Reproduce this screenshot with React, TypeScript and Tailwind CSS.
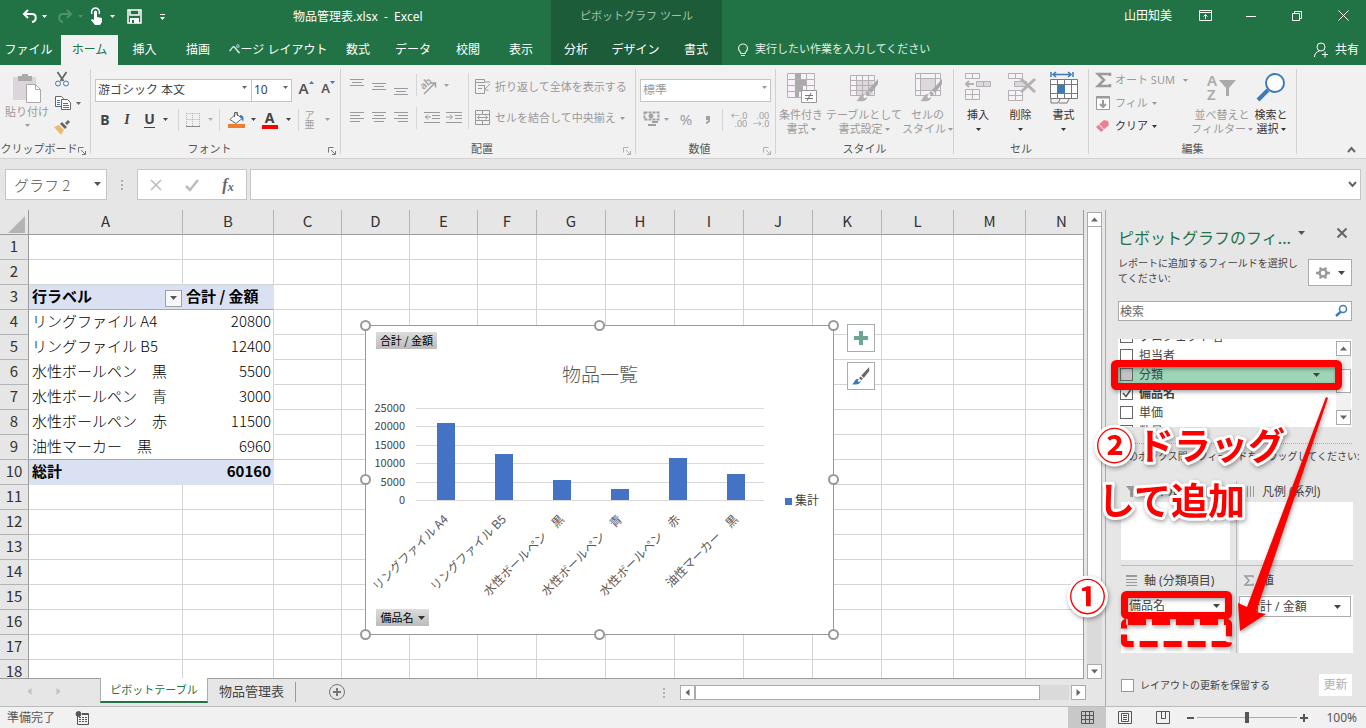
import type { ReactNode } from "react"

const columns = [
  { name: "A", width: 154 },
  { name: "B", width: 91 },
  { name: "C", width: 68 },
  { name: "D", width: 68 },
  { name: "E", width: 68 },
  { name: "F", width: 59 },
  { name: "G", width: 69 },
  { name: "H", width: 69 },
  { name: "I", width: 69 },
  { name: "J", width: 69 },
  { name: "K", width: 69 },
  { name: "L", width: 72 },
  { name: "M", width: 72 },
  { name: "N", width: 72 },
]

const pivot: Record<number, [string, string]> = {
  3: ["行ラベル", "合計 / 金額"],
  4: ["リングファイル A4", "20800"],
  5: ["リングファイル B5", "12400"],
  6: ["水性ボールペン　黒", "5500"],
  7: ["水性ボールペン　青", "3000"],
  8: ["水性ボールペン　赤", "11500"],
  9: ["油性マーカー　黒", "6960"],
  10: ["総計", "60160"],
}

const rows = Array.from({ length: 18 }, (_, i) => i + 1)

const bars = [4, 5, 6, 7, 8, 9].map((n) => ({ label: pivot[n][0], value: Number(pivot[n][1]) }))

const fields = [
  { name: "プロジェクト名" },
  { name: "担当者" },
  { name: "分類", active: true },
  { name: "備品名", checked: true },
  { name: "単価" },
  { name: "数量" },
]

function Caret({ small, className = "" }: { small?: boolean; className?: string }) {
  return (
    <svg
      viewBox="0 0 7 4"
      className={`shrink-0 ${small ? "h-[3px] w-[5px]" : "h-1 w-[7px]"} ${className}`}
      fill="currentColor"
      aria-hidden="true"
    >
      <path d="M0 0h7L3.5 4z" />
    </svg>
  )
}

function Icon({ size = 16, className = "", children }: { size?: number; className?: string; children: ReactNode }) {
  return (
    <svg
      width={size}
      height={size}
      viewBox={`0 0 ${size} ${size}`}
      fill="none"
      stroke="currentColor"
      className={`shrink-0 overflow-visible ${className}`}
      aria-hidden="true"
    >
      {children}
    </svg>
  )
}

function Tool({ label, className = "", children }: { label: string; className?: string; children: ReactNode }) {
  return (
    <button type="button" aria-label={label} className={`flex h-6 shrink-0 items-center justify-center ${className}`}>
      {children}
    </button>
  )
}

function Separator() {
  return <div className="mx-1 h-[22px] w-px shrink-0 bg-[#d5d5d5]" />
}

function Group({
  title,
  launcher,
  faded,
  className,
  children,
}: {
  title: string
  launcher?: boolean
  faded?: boolean
  className: string
  children: ReactNode
}) {
  return (
    <section className={`flex shrink-0 ${className}`}>
      <div className="flex min-w-0 flex-1 flex-col">
        <div className="h-[75px]">{children}</div>
        <div className="flex h-[18px] text-[#555]">
          <h2 className="flex flex-1 items-center justify-center text-[11px] whitespace-nowrap">{title}</h2>
          {launcher && (
            <button
              type="button"
              aria-label={`${title}の設定`}
              className={`mr-1 flex shrink-0 items-end pb-[3px] ${faded ? "text-[#b0b0b0]" : "text-[#777]"}`}
            >
              <Icon size={8}>
                <path d="M.5 5.5V.5h5M3 3l4 4M7.5 4v3.5H4" />
              </Icon>
            </button>
          )}
        </div>
      </div>
      <div className="my-1 w-px bg-[#d2d2d2]" />
    </section>
  )
}

function BigTool({
  icon,
  lines,
  faded,
  className,
}: {
  icon: ReactNode
  lines: string[]
  faded?: boolean
  className: string
}) {
  return (
    <button
      type="button"
      className={`flex shrink-0 flex-col items-center pt-[7px] text-[11px] leading-[14px] ${
        faded ? "text-[#9a9a9a]" : "text-[#333]"
      } ${className}`}
    >
      {icon}
      <span className="mt-1 whitespace-nowrap">{lines[0]}</span>
      <span className="flex h-[14px] items-center gap-0.5 whitespace-nowrap">
        {lines[1]}
        <Caret small />
      </span>
    </button>
  )
}

function LineTool({ label, d }: { label: string; d: string }) {
  return (
    <Tool label={label} className="w-[22px] text-[#9a9a9a]">
      <Icon>
        <path d={d} />
      </Icon>
    </Tool>
  )
}

function Brush({ blue }: { blue?: boolean }) {
  return (
    <g stroke="none" fill={blue ? "#666" : "#aaa"}>
      <path d="M30 7v5l-7 9-3-3z" />
      <path d="M19 19l3 3-2 2-3-3z" />
      <path fill={blue ? "#3f7ab8" : "#b4b0b4"} d="M16 22l3 3c0 4-4 5-11 4 3-1 3-7 8-7z" />
      <circle cx="17" cy="24.5" r="1.5" fill="#fff" />
    </g>
  )
}

function TitleBar() {
  const tabs = [
    { name: "ファイル", width: "w-[61px] pr-1" },
    { name: "ホーム", width: "w-[57px]", active: true },
    { name: "挿入", width: "w-[53px]" },
    { name: "描画", width: "w-[54px]" },
    { name: "ページ レイアウト", width: "w-[106px]" },
    { name: "数式", width: "w-[54px]" },
    { name: "データ", width: "w-[56px]" },
    { name: "校閲", width: "w-[54px]" },
    { name: "表示", width: "w-[52px]" },
  ]
  return (
    <header className="flex h-[65px] shrink-0 bg-[#217346] text-xs text-white">
      <div className="flex w-[551px] shrink-0 flex-col">
        <div className="flex h-[33px] items-center pl-5">
          <Tool label="元に戻す" className="w-7 gap-1">
            <Icon size={17}>
              <path strokeWidth="2" d="M3 6h8c5 0 5 7 0 8M7 2L3 6l4 4" />
            </Icon>
            <Caret small />
          </Tool>
          <Tool label="やり直し" className="ml-2 w-7 gap-1 text-[#4f9169]">
            <Icon size={17}>
              <path strokeWidth="2" d="M14 6H6c-5 0-5 7 0 8M10 2l4 4-4 4" />
            </Icon>
            <Caret small />
          </Tool>
          <Tool label="タッチ/マウス モード" className="ml-1 w-7 gap-1">
            <Icon size={17}>
              <path d="M3 6a4 4 0 1 1 7 0" strokeWidth="1.5" />
              <path stroke="none" fill="currentColor" d="M5 4a1.5 1.5 0 0 1 3 0v5l5 1v4l-2 3H6l-4-5 1-1 2 1z" />
            </Icon>
            <Caret small />
          </Tool>
          <Tool label="上書き保存" className="ml-2 w-5">
            <Icon size={15}>
              <path strokeWidth="1.5" d="M1 1h13v13H1zM3 1v5h9V1" />
              <path stroke="none" fill="currentColor" d="M3 9h9v5H3z" />
              <path stroke="#217346" strokeWidth="2" d="M6 11v3" />
            </Icon>
          </Tool>
          <Tool label="クイック アクセスのカスタマイズ" className="ml-2 w-5 flex-col gap-0.5">
            <span className="h-px w-[5px] bg-white" />
            <Caret small />
          </Tool>
          <h1 className="ml-auto w-[258px] whitespace-pre">物品管理表.xlsx  -  Excel</h1>
        </div>
        <nav className="mt-0.5 flex h-[30px]">
          {tabs.map((tab) => (
            <button
              key={tab.name}
              type="button"
              className={`shrink-0 whitespace-nowrap ${tab.width} ${tab.active ? "bg-[#f1f1f1] text-[#217346]" : ""}`}
            >
              {tab.name}
            </button>
          ))}
        </nav>
      </div>
      <div className="flex w-[171px] shrink-0 flex-col bg-[#1d5c39]">
        <p className="flex h-[33px] items-center justify-center text-[11px] text-[#a3c4b0]">ピボットグラフ ツール</p>
        <nav className="mt-0.5 flex h-[30px]">
          <button type="button" className="w-[50px]">分析</button>
          <button type="button" className="w-[69px]">デザイン</button>
          <button type="button" className="w-[52px]">書式</button>
        </nav>
      </div>
      <div className="flex min-w-0 flex-1 flex-col">
        <div className="flex h-[31px] items-center justify-end">
          <span className="mr-[10px]">山田知美</span>
          <Tool label="リボンの表示オプション" className="w-[46px]">
            <Icon size={13}>
              <path d="M.5 1.5h12v10H.5zM.5 3.5h12M6.5 10V5.5M4.5 7.5l2-2 2 2" />
            </Icon>
          </Tool>
          <Tool label="最小化" className="w-[46px]">
            <Icon size={10}>
              <path d="M0 5.5h10" />
            </Icon>
          </Tool>
          <Tool label="元に戻す (縮小)" className="w-[46px]">
            <Icon size={10}>
              <path d="M.5 2.5h7v7h-7zM2.5 2V.5h7v7H8" />
            </Icon>
          </Tool>
          <Tool label="閉じる" className="w-[46px]">
            <Icon size={11}>
              <path d="M.5.5l10 10M10.5.5l-10 10" />
            </Icon>
          </Tool>
        </div>
        <div className="flex h-[34px] items-center justify-between pt-[3px] pr-[7px] pl-[15px]">
          <button type="button" className="flex items-center gap-1.5 text-[11px] text-[#e3efe8]">
            <Icon size={12}>
              <path strokeWidth="1.2" d="M4 9.5C4 8 1.5 7 1.5 4.5a4.5 4.5 0 0 1 9 0C10.5 7 8 8 8 9.5zM4 11.5h4" />
            </Icon>
            実行したい作業を入力してください
          </button>
          <button type="button" className="flex items-center gap-1.5">
            <Icon>
              <circle cx="8" cy="5" r="4" />
              <path d="M1.5 15c0-3 2-5.5 5-6M9 12.5h6M12 9.5v6" />
            </Icon>
            共有
          </button>
        </div>
      </div>
    </header>
  )
}

function ClipboardGroup() {
  return (
    <Group title="クリップボード" launcher className="w-[91px]">
      <div className="flex">
        <button
          type="button"
          className="flex w-[54px] flex-col items-center pt-2 text-[11px] leading-[14px] text-[#9a9a9a]"
        >
          <Icon size={30}>
            <path stroke="none" fill="#dcd6dc" d="M1 4h23v23H1z" />
            <path stroke="none" fill="#aaa" d="M6 3h4V1h6v2h4v5H6z" />
            <path stroke="#aaa" fill="#fff" d="M14.5 11.5h9l5 5v13h-14z" />
            <path stroke="#aaa" d="M23.5 11.5v5h5" />
          </Icon>
          <span className="mt-0.5">貼り付け</span>
          <Caret small className="mt-[5px]" />
        </button>
        <div className="flex flex-col pt-0.5">
          <Tool label="切り取り" className="w-4">
            <Icon>
              <path stroke="#666" strokeWidth="1.8" d="M3.5 1l6 9M12.5 1l-6 9" />
              <circle cx="4" cy="12.5" r="2.5" stroke="#3f7ab8" />
              <circle cx="12" cy="12.5" r="2.5" stroke="#3f7ab8" />
            </Icon>
          </Tool>
          <Tool label="コピー" className="w-7 gap-[5px]">
            <Icon>
              <path stroke="#666" fill="#fff" d="M.5 1.5h6l2 2v8h-8z" />
              <path stroke="#666" fill="#fff" d="M6.5 4.5h6l3 3v7h-9z" />
              <path stroke="#3f7ab8" d="M2 5.5h3M2 7.5h3M2 9.5h3M8 8.5h5M8 10.5h6M8 12.5h6" />
            </Icon>
            <Caret small className="text-[#666]" />
          </Tool>
          <Tool label="書式のコピー/貼り付け" className="w-4">
            <Icon>
              <path stroke="none" fill="#eebb6d" d="M0 8l5-2 5 5-3 5z" />
              <path stroke="none" fill="#666" d="M6 5l2-2 5 5-2 2zM11 4l3-3 2 2-3 3z" />
            </Icon>
          </Tool>
        </div>
      </div>
    </Group>
  )
}

function FontGroup() {
  return (
    <Group title="フォント" launcher className="w-[250px]">
      <div className="flex pt-[11px] pl-1">
        <div className="relative">
          <select
            aria-label="フォント"
            className="h-[23px] w-[157px] appearance-none border border-[#c6c6c6] bg-white pl-0.5 text-xs leading-none text-[#444]"
          >
            <option>游ゴシック 本文</option>
          </select>
          <Caret small className="pointer-events-none absolute top-[10px] right-[5px] text-[#666]" />
        </div>
        <div className="relative">
          <select
            aria-label="フォント サイズ"
            className="h-[23px] w-10 appearance-none border border-l-0 border-[#c6c6c6] bg-white pl-0.5 text-xs leading-none text-[#444]"
          >
            <option>10</option>
          </select>
          <Caret small className="pointer-events-none absolute top-[10px] right-1 text-[#666]" />
        </div>
        <Tool label="フォント サイズの拡大" className="w-7 text-[#555]">
          <span className="text-[15px] leading-5 font-semibold">A</span>
          <Caret small className="mb-3 rotate-180 text-[#3f7ab8]" />
        </Tool>
        <Tool label="フォント サイズの縮小" className="w-4 text-[#555]">
          <span className="text-[13px] leading-5 font-semibold">A</span>
          <Caret small className="mb-3 text-[#3f7ab8]" />
        </Tool>
      </div>
      <div className="mt-[6px] flex items-center pl-[3px] text-sm text-[#444]">
        <Tool label="太字" className="w-[22px] font-bold">B</Tool>
        <Tool label="斜体" className="w-[22px] font-['Liberation_Serif',serif] font-bold italic">I</Tool>
        <Tool label="下線" className="w-9 gap-2 font-bold">
          <span className="border-b border-[#444] leading-4">U</span>
          <Caret small />
        </Tool>
        <Separator />
        <Tool label="罫線" className="w-8 gap-2 text-[#b0b0b0]">
          <Icon size={14}>
            <path strokeDasharray="1 1" d="M.5.5h13M.5 6.5h13M.5 0v13M6.5 0v13M13.5 0v13" />
            <path stroke="#888" d="M0 13.5h14" />
          </Icon>
          <Caret small />
        </Tool>
        <Separator />
        <Tool label="塗りつぶしの色" className="ml-0.5 w-8 gap-1.5">
          <Icon size={17}>
            <path stroke="#666" fill="#fff" d="M8 2.5l6 5-6 5-6-4zM6.5 6V1.5h3V5" />
            <path stroke="none" fill="#3f7ab8" d="M12 4c4 0 4 4 3 7-1-2-1-4-3-5z" />
            <path stroke="none" fill="#ed7d31" d="M0 13h17v4H0z" />
          </Icon>
          <Caret small />
        </Tool>
        <Tool label="フォントの色" className="w-9 gap-2">
          <span className="w-4 border-b-4 border-[#f00] text-center leading-[14px] font-bold">A</span>
          <Caret small />
        </Tool>
        <Separator />
        <Tool label="ふりがなの表示/非表示" className="w-7 gap-2.5 text-[#a0a0a0]">
          <span className="flex flex-col items-center text-[10px] leading-[9px]">
            <span>ア</span>
            <span>亜</span>
          </span>
          <Caret small />
        </Tool>
      </div>
    </Group>
  )
}

function AlignGroup() {
  return (
    <Group title="配置" launcher faded className="w-[295px]">
      <div className="flex pt-2 pl-[5px]">
        <div className="flex flex-col gap-[9px]">
          <div className="flex items-center">
            <LineTool label="上揃え" d="M1 2.5h14M3 5.5h10M1 8.5h14" />
            <LineTool label="上下中央揃え" d="M1 6.5h14M3 9.5h10M1 12.5h14" />
            <LineTool label="下揃え" d="M1 11.5h14M3 14.5h10M1 17.5h14" />
            <Separator />
            <Tool label="方向" className="w-7 gap-1.5 text-[#a0a0a0]">
              <Icon size={17}>
                <path d="M3 17L14 6M10 6h4.5v4.5" strokeWidth="1.5" />
                <text
                  x="0"
                  y="11"
                  fontSize="10"
                  fontWeight="600"
                  stroke="none"
                  fill="currentColor"
                  transform="rotate(-40 4 9)"
                >
                  ab
                </text>
              </Icon>
              <Caret small />
            </Tool>
          </div>
          <div className="flex items-center">
            <LineTool label="左揃え" d="M1 2.5h14M1 5.5h10M1 8.5h14M1 11.5h10" />
            <LineTool label="中央揃え" d="M1 2.5h14M3 5.5h10M1 8.5h14M3 11.5h10" />
            <LineTool label="右揃え" d="M1 2.5h14M5 5.5h10M1 8.5h14M5 11.5h10" />
            <Separator />
            <LineTool label="インデントを減らす" d="M0 2.5h16M8 5.5h8M8 8.5h8M0 12.5h16M7 7H1M4 4.5L1.5 7 4 9.5" />
            <LineTool label="インデントを増やす" d="M0 2.5h16M9 5.5h7M9 8.5h7M0 12.5h16M0 7h6M4 4.5L6.5 7 4 9.5" />
          </div>
        </div>
        <div className="mr-1.5 ml-[3px] h-[56px] w-px bg-[#d5d5d5]" />
        <div className="flex flex-col gap-[7px] pt-0.5 text-[11px] whitespace-nowrap text-[#9a9a9a]">
          <button type="button" className="flex h-6 items-center gap-1">
            <Icon>
              <path d="M.5.5h9v3h-9zM.5 3.5v11h9v-3M3 6.5h7M3 9.5h4M10 3h5M15 5l-5 5M9.5 7v4h4" />
            </Icon>
            折り返して全体を表示する
          </button>
          <button type="button" className="flex h-6 items-center gap-1">
            <Icon>
              <path d="M.5.5h14v14H.5zM.5 4.5h14M.5 10.5h14M7.5 0v4M7.5 11v4M2.5 7.5h10M4.5 5.5l-2 2 2 2M10.5 5.5l2 2-2 2" />
            </Icon>
            セルを結合して中央揃え
            <Caret small />
          </button>
        </div>
      </div>
    </Group>
  )
}

function NumberGroup() {
  return (
    <Group title="数値" launcher faded className="w-[140px]">
      <div className="relative mt-[11px] ml-1 w-[131px]">
        <select
          aria-label="表示形式"
          className="h-[23px] w-full appearance-none border border-[#c6c6c6] bg-white pl-0.5 text-xs leading-none text-[#999]"
        >
          <option>標準</option>
        </select>
        <Caret small className="pointer-events-none absolute top-[10px] right-1 text-[#999]" />
      </div>
      <div className="mt-[6px] flex items-center pl-1.5 text-[#a0a0a0]">
        <Tool label="通貨表示形式" className="w-7 gap-1">
          <Icon size={17}>
            <path d="M1.5 1.5h14v7h-14z" strokeWidth="2" strokeDasharray="3 1" />
            <circle cx="8" cy="5" r="2" fill="currentColor" />
            <path strokeWidth="2" d="M9 11h6M5 14h8" />
          </Icon>
          <Caret small />
        </Tool>
        <Tool label="パーセント スタイル" className="ml-1 w-6 text-[15px]">%</Tool>
        <Tool label="桁区切りスタイル" className="w-5">
          <Icon size={8}>
            <path stroke="none" fill="currentColor" d="M2 0h4v4c0 2-1 3-4 4V6c1 0 2-1 2-2H2z" />
          </Icon>
        </Tool>
        <Separator />
        <Tool label="小数点以下の表示桁数を増やす" className="w-6">
          <span className="flex flex-col items-end text-[9px] leading-[8px]">
            <span>←.0</span>
            <span>.00</span>
          </span>
        </Tool>
        <Tool label="小数点以下の表示桁数を減らす" className="w-5">
          <span className="flex flex-col items-end text-[9px] leading-[8px]">
            <span>.00</span>
            <span>→.0</span>
          </span>
        </Tool>
      </div>
    </Group>
  )
}

function StyleGroup() {
  return (
    <Group title="スタイル" className="w-[178px]">
      <div className="flex">
        <BigTool
          faded
          className="w-[50px]"
          lines={["条件付き", "書式"]}
          icon={
            <Icon size={32} className="text-[#b4b0b4]">
              <path fill="#f7f2f7" d="M2.5 1.5h27v24h-27zM2.5 7.5h27M2.5 13.5h27M2.5 19.5h27M10.5 1v24M21.5 1v24" />
              <path stroke="none" fill="#aaa" d="M10 1h6v6h-6zM10 8h11v5H10zM10 14h8v5h-8zM10 20h4v5h-4z" />
              <path stroke="#999" fill="#fff" d="M16.5 18.5h15v12h-15z" />
              <path stroke="#777" d="M20 23.5h8M20 26.5h8M26 21l-4 8" />
            </Icon>
          }
        />
        <BigTool
          faded
          className="w-[76px]"
          lines={["テーブルとして", "書式設定"]}
          icon={
            <Icon size={32} className="text-[#b4b0b4]">
              <path stroke="none" fill="#f7f2f7" d="M2 3h25v21H2z" />
              <path stroke="none" fill="#ddd8dd" d="M9 9h16v14H9z" />
              <path d="M2.5 3.5h24v20h-24zM2.5 8.5h24M2.5 13.5h24M2.5 18.5h24M8.5 3v20M14.5 3v20M20.5 3v20" />
              <Brush />
            </Icon>
          }
        />
        <BigTool
          faded
          className="w-[51px]"
          lines={["セルの", "スタイル"]}
          icon={
            <Icon size={32} className="text-[#b4b0b4]">
              <path fill="#f7f2f7" d="M3.5 1.5h25v22h-25zM3.5 6.5h25M3.5 18.5h25M8.5 1v22M23.5 1v22" />
              <path fill="#ddd8dd" d="M8.5 6.5h15v12h-15z" />
              <Brush />
            </Icon>
          }
        />
      </div>
    </Group>
  )
}

function CellGroup() {
  return (
    <Group title="セル" className="w-[135px]">
      <div className="flex pl-[3px]">
        <BigTool
          className="w-[42px]"
          lines={["挿入", ""]}
          icon={
            <Icon size={32} className="text-[#b4b0b4]">
              <path fill="#f7f2f7" d="M3.5 1.5h14v5h-14zM10.5 1v6M3.5 17.5h14v10h-14zM3.5 22.5h14M10.5 17v10" />
              <path fill="#ddd8dd" d="M14.5 9.5h14v5h-14zM21.5 9v6" />
              <path strokeWidth="2" d="M4 12h8M7 9l-3 3 3 3" />
            </Icon>
          }
        />
        <BigTool
          className="w-[43px]"
          lines={["削除", ""]}
          icon={
            <Icon size={32} className="text-[#b4b0b4]">
              <path fill="#f7f2f7" d="M3.5 1.5h14v5h-14zM10.5 1v6M3.5 18.5h14v10h-14zM3.5 23.5h14M10.5 18v10" />
              <path fill="#ddd8dd" d="M9.5 9.5h12v5h-12z" />
              <path strokeWidth="3" d="M16 7l14 13M30 7L16 20" />
            </Icon>
          }
        />
        <BigTool
          className="w-[43px]"
          lines={["書式", ""]}
          icon={
            <Icon size={32} className="text-[#777]">
              <path stroke="#3f7ab8" strokeWidth="1.5" d="M3 0v5M25 0v5M5 2.5h18M8 0L5 2.5 8 5M20 0l3 2.5L20 5" />
              <path fill="#fff" d="M2.5 7.5h27v19h-27zM2.5 12.5h27M2.5 21.5h27M9.5 7v19M16.5 7v19M23.5 7v19" />
              <path stroke="none" fill="#3f7ab8" d="M10 13h7v8h-7z" />
              <path d="M3 27v4h7l2-4M11 31h8l2-4" />
            </Icon>
          }
        />
      </div>
    </Group>
  )
}

function EditGroup() {
  return (
    <Group title="編集" className="w-[208px]">
      <div className="flex">
        <div className="flex w-[104px] flex-col items-start pt-[3px] pl-1.5 text-[11px] text-[#9a9a9a]">
          <button type="button" className="flex h-6 items-center gap-1">
            <Icon>
              <path strokeWidth="2.5" d="M15 4V2H3l6 6-6 6h12v-2" />
            </Icon>
            オート SUM
            <Caret small className="ml-1" />
          </button>
          <button type="button" className="flex h-[22px] items-center gap-1">
            <Icon>
              <path d="M1.5 1.5h13v13h-13z" fill="#fff" />
              <path strokeWidth="2" d="M1 2.5h14M8 5v7M5 9l3 3 3-3" />
            </Icon>
            フィル
            <Caret small />
          </button>
          <button type="button" className="flex h-6 items-center gap-1 text-[#333]">
            <Icon>
              <path stroke="none" fill="#e88098" d="M1 9l8-7 4 1 1 4-8 7z" />
              <path stroke="#fff" d="M4 6.5l5 5" />
            </Icon>
            クリア
            <Caret small />
          </button>
        </div>
        <BigTool
          faded
          className="w-[58px]"
          lines={["並べ替えと", "フィルター"]}
          icon={
            <Icon size={32} className="text-[#aaa]">
              <text x="1" y="14" fontSize="15" fontWeight="600" stroke="none" fill="currentColor">
                A
              </text>
              <text x="1" y="28" fontSize="15" fontWeight="600" stroke="none" fill="currentColor">
                Z
              </text>
              <path stroke="none" fill="currentColor" d="M13 8h17l-7 8v8h-3v-8z" />
            </Icon>
          }
        />
        <BigTool
          className="w-[40px]"
          lines={["検索と", "選択"]}
          icon={
            <Icon size={32}>
              <circle cx="20" cy="11" r="9" stroke="#3f7ab8" strokeWidth="2" fill="#fff" />
              <path stroke="#3f7ab8" strokeWidth="4" d="M13 18L3 28" />
            </Icon>
          }
        />
      </div>
    </Group>
  )
}

function Ribbon() {
  return (
    <div className="flex h-[94px] shrink-0 border-b border-[#d2d2d2] bg-[#f1f1f1]">
      <ClipboardGroup />
      <FontGroup />
      <AlignGroup />
      <NumberGroup />
      <StyleGroup />
      <CellGroup />
      <EditGroup />
      <div className="flex flex-1 items-end justify-end pr-2.5 pb-1">
        <button type="button" aria-label="リボンを折りたたむ" className="text-[#666]">
          <Icon size={9}>
            <path strokeWidth="2" d="M1 7l3.500-4L8 7" />
          </Icon>
        </button>
      </div>
    </div>
  )
}

function FormulaBar() {
  return (
    <div className="flex h-[51px] shrink-0 items-start bg-[#e6e6e6] px-[5px] pt-2.5 text-[#555]">
      <div className="relative">
        <input
          aria-label="名前ボックス"
          defaultValue="グラフ 2"
          className="h-[31px] w-[102px] border border-[#c6c6c6] bg-white pl-2 font-['Noto_Sans_CJK_JP',sans-serif] text-[15px] font-light"
        />
        <Caret className="absolute top-[13px] right-[6px]" />
      </div>
      <div className="flex h-[31px] w-[30px] flex-col items-center justify-center gap-0.5">
        <span className="size-0.5 bg-[#b0b0b0]" />
        <span className="size-0.5 bg-[#b0b0b0]" />
        <span className="size-0.5 bg-[#b0b0b0]" />
      </div>
      <div className="flex h-[31px] w-[110px] items-center justify-around border border-[#c6c6c6] bg-white text-[#bbb]">
        <Tool label="キャンセル" className="w-6">
          <Icon size={12}>
            <path strokeWidth="1.5" d="M1 1l10 10M11 1L1 11" />
          </Icon>
        </Tool>
        <Tool label="入力" className="w-6">
          <Icon size={14}>
            <path strokeWidth="2.5" d="M1 8l4 4 8-10" />
          </Icon>
        </Tool>
        <Tool label="関数の挿入" className="w-6 font-['Liberation_Serif',serif] text-base font-bold text-[#666] italic">
          f<span className="pt-1 text-xs">x</span>
        </Tool>
      </div>
      <div className="relative ml-[3px] flex-1">
        <input aria-label="数式バー" className="h-[31px] w-full border border-[#c6c6c6] bg-white px-2 text-sm" />
        <Icon size={9} className="absolute top-[11px] right-1 text-[#666]">
          <path strokeWidth="2" d="M1 2l3.500 4L8 2" />
        </Icon>
      </div>
    </div>
  )
}

function PivotCell({ row, col }: { row: number; col: number }) {
  const heading = row === 3 || row === 10
  const text = pivot[row][col]
  const line = row === 3 || row === 9 ? "border-b-[#8ea9db]" : heading ? "border-b-[#d9e1f2]" : "border-b-white"
  const side = col === 0 ? "" : heading ? "border-r border-r-[#d9e1f2]" : "border-r border-r-[#d4d4d4]"
  const align = col === 1 && row !== 3 ? "pr-0.5 pl-[3px] text-right" : "px-[3px]"
  return (
    <td
      className={`border-b pt-0 pb-0.5 whitespace-nowrap ${line} ${side} ${align} ${
        heading ? "bg-[#d9e1f2] font-bold" : "bg-white font-light"
      }`}
    >
      {row === 3 && col === 0 ? (
        <span className="flex items-center justify-between">
          {text}
          <button
            type="button"
            aria-label="行ラベルのフィルター"
            className="mt-1 -mr-0.5 flex size-[17px] items-center justify-center border border-[#a0a0a0] bg-[#f7f7fb] text-[#555]"
          >
            <Caret />
          </button>
        </span>
      ) : (
        text
      )}
    </td>
  )
}

function Sheet() {
  return (
    <table className="w-max table-fixed border-separate border-spacing-0 bg-white text-[15px] leading-[20px] text-black">
      <colgroup>
        <col style={{ width: 29 }} />
        {columns.map((c) => (
          <col key={c.name} style={{ width: c.width }} />
        ))}
      </colgroup>
      <thead>
        <tr className="h-[25px] bg-[#e6e6e6]">
          <th className="border-r border-b border-[#9b9b9b] p-0">
            <svg viewBox="0 0 17 17" className="mt-1 ml-2 size-[17px]" fill="#b4b4b4" aria-label="すべて選択">
              <path d="M17 0v17H0z" />
            </svg>
          </th>
          {columns.map((c) => (
            <th
              key={c.name}
              scope="col"
              className="border-r border-b border-r-[#b4b4b4] border-b-[#9b9b9b] p-0 pb-0.5 text-center font-normal text-[#333]"
            >
              {c.name}
            </th>
          ))}
        </tr>
      </thead>
      <tbody>
        {rows.map((row) => (
          <tr key={row} className="h-[25px]">
            <th
              scope="row"
              className="border-r border-b border-r-[#9b9b9b] border-b-[#b4b4b4] bg-[#e6e6e6] p-0 pb-0.5 text-center font-normal text-[#333]"
            >
              {row}
            </th>
            {columns.map((c, col) =>
              col < 2 && row in pivot ? (
                <PivotCell key={c.name} row={row} col={col} />
              ) : (
                <td key={c.name} className="border-r border-b border-[#d4d4d4] p-0" />
              ),
            )}
          </tr>
        ))}
      </tbody>
    </table>
  )
}

function Chart() {
  const baseline = 175
  const scale = 92 / 25000
  const handles = [0, 234, 468]
    .flatMap((x) => [0, 154, 309].map((y) => [x, y]))
    .filter(([x, y]) => x !== 234 || y !== 154)
  return (
    <div className="absolute top-[115px] left-[365px] h-[310px] w-[469px] border border-[#999] bg-white font-['Noto_Sans_CJK_JP',sans-serif]">
      <svg
        viewBox="0 0 469 310"
        className="absolute -top-px -left-px h-[310px] w-[469px] overflow-visible"
        role="img"
        aria-label="物品一覧"
      >
        <text x="235" y="57" textAnchor="middle" fontSize="19" fontWeight="300" fill="#595959">
          物品一覧
        </text>
        {[0, 5000, 10000, 15000, 20000, 25000].map((tick) => {
          const y = Math.round(baseline - tick * scale)
          return (
            <g key={tick}>
              <path d={`M51 ${y + 0.5}h348`} stroke="#d9d9d9" />
              <text x="40" y={y + 4} textAnchor="end" fontSize="11" fill="#444">
                {tick}
              </text>
            </g>
          )
        })}
        {bars.map((bar, i) => {
          const x = 72 + i * 58
          const height = Math.round(bar.value * scale)
          return (
            <g key={bar.label}>
              <rect x={x} y={baseline - height} width="18" height={height} fill="#4472c4" />
              <text x={x + 12} y="195" textAnchor="end" fontSize="12" fill="#595959" transform={`rotate(-45 ${x + 12} 195)`}>
                {bar.label}
              </text>
            </g>
          )
        })}
        <rect x="420" y="173" width="7" height="7" fill="#4472c4" />
        <text x="430" y="180" fontSize="12" fill="#444">
          集計
        </text>
        {handles.map(([x, y]) => (
          <circle key={`${x}-${y}`} cx={x + 0.5} cy={y + 0.5} r="4.5" fill="#fff" stroke="#999" strokeWidth="2" />
        ))}
      </svg>
      <button
        type="button"
        className="absolute top-1.5 left-2.5 h-[17px] w-[61px] bg-linear-to-b from-[#dcdcdc] to-[#bcbcbc] text-[11px] leading-[17px] whitespace-nowrap text-black"
      >
        合計 / 金額
      </button>
      <button
        type="button"
        className="absolute bottom-2 left-2.5 flex h-[17px] w-[53px] items-center justify-center gap-1 bg-linear-to-b from-[#dcdcdc] to-[#bcbcbc] text-[11px] whitespace-nowrap text-black"
      >
        備品名
        <Caret className="text-[#333]" />
      </button>
      <div className="absolute -top-0.5 left-[481px] flex flex-col gap-2.5">
        <button
          type="button"
          aria-label="グラフ要素"
          className="flex size-7 items-center justify-center border border-[#ababab] bg-white"
        >
          <Icon size={14}>
            <path stroke="#6aa892" strokeWidth="4" d="M7 0v14M0 7h14" />
          </Icon>
        </button>
        <button
          type="button"
          aria-label="グラフ スタイル"
          className="flex size-7 items-center justify-center border border-[#ababab] bg-white"
        >
          <svg viewBox="8 7 23 23" className="size-[18px]" aria-hidden="true">
            <Brush blue />
          </svg>
        </button>
      </div>
    </div>
  )
}

function ScrollButton({ label, d, className = "" }: { label: string; d: string; className?: string }) {
  return (
    <button
      type="button"
      aria-label={label}
      className={`flex size-[15px] shrink-0 items-center justify-center border border-[#ababab] bg-white text-[#666] ${className}`}
    >
      <svg viewBox="0 0 7 7" className="size-[7px]" fill="currentColor" aria-hidden="true">
        <path d={d} />
      </svg>
    </button>
  )
}

const arrowUp = "M0 5.5L3.5 1.5 7 5.5z"
const arrowDown = "M0 1.5h7L3.5 5.5z"
const arrowLeft = "M5.5 0v7l-4-3.5z"
const arrowRight = "M1.5 0v7l4-3.5z"

function SheetTabs() {
  return (
    <div className="flex h-[27px] shrink-0 bg-[#e6e6e6] text-xs text-[#444]">
      <div className="flex w-[100px] shrink-0 items-center gap-[22px] pb-0.5 pl-[26px] text-[#c0c0c0]">
        <svg viewBox="0 0 7 7" className="size-[7px]" fill="currentColor" aria-hidden="true">
          <path d={arrowLeft} />
        </svg>
        <svg viewBox="0 0 7 7" className="size-[7px]" fill="currentColor" aria-hidden="true">
          <path d={arrowRight} />
        </svg>
      </div>
      <button
        type="button"
        className="relative z-10 -mt-px h-[25px] w-[108px] border-x border-b-2 border-x-[#ababab] border-b-[#217346] bg-white pt-0.5 text-[11px] whitespace-nowrap text-[#217346]"
      >
        ピボットテーブル
      </button>
      <button type="button" className="mt-[3px] h-5 w-[88px] border-r border-[#9b9b9b] text-[13px]">
        物品管理表
      </button>
      <Tool label="新しいシート" className="ml-8 w-[18px] text-[#777]">
        <Icon size={18}>
          <circle cx="9" cy="10" r="7.5" />
          <path strokeWidth="2" d="M9 6v8M5 10h8" />
        </Icon>
      </Tool>
      <div className="mr-[19px] ml-auto flex w-[424px] pt-1.5">
        <div className="flex h-[15px] w-[18px] shrink-0 flex-col items-start justify-center gap-0.5 pl-px">
          <span className="size-0.5 bg-[#b0b0b0]" />
          <span className="size-0.5 bg-[#b0b0b0]" />
          <span className="size-0.5 bg-[#b0b0b0]" />
        </div>
        <ScrollButton label="左へスクロール" d={arrowLeft} />
        <div className="mr-0.5 flex h-[15px] flex-1 bg-[#dadada]">
          <div className="w-[345px] border border-[#ababab] bg-white" />
        </div>
        <ScrollButton label="右へスクロール" d={arrowRight} />
      </div>
    </div>
  )
}

function FieldRow({ name, checked, active }: { name: string; checked?: boolean; active?: boolean }) {
  return (
    <li className={`h-[19px] ${active ? "bg-[#9fd5b7]" : ""}`}>
      <label className="relative flex h-full items-center gap-1.5 pr-4 pl-0.5">
        <input
          type="checkbox"
          defaultChecked={checked}
          className={`size-[13px] appearance-none border border-[#666] ${active ? "bg-[#c3c3c3]" : "bg-white"}`}
        />
        {checked && (
          <Icon size={13} className="pointer-events-none absolute left-0.5 text-[#555]">
            <path strokeWidth="1.5" d="M3 6l3 3.500L10.5 3" />
          </Icon>
        )}
        <span className={checked ? "font-bold" : ""}>{name}</span>
        {active && <Caret className="ml-auto" />}
      </label>
    </li>
  )
}

function DropArea({
  title,
  icon,
  className,
  children,
}: {
  title: string
  icon: ReactNode
  className: string
  children?: ReactNode
}) {
  return (
    <div className={`flex flex-col ${className}`}>
      <h3 className="flex flex-1 items-center gap-1.5 pl-1 text-xs whitespace-nowrap">
        {icon}
        {title}
      </h3>
      <div className="h-[58px] bg-white">{children}</div>
    </div>
  )
}

// Red callouts that explain where the field is dragged to
function Callouts() {
  return (
    <svg
      className="pointer-events-none absolute inset-0 z-20 size-full overflow-visible font-['Noto_Sans_CJK_JP',sans-serif] [filter:drop-shadow(1px_2px_2px_rgba(0,0,0,0.35))]"
      fill="none"
      aria-hidden="true"
    >
      <rect x="8.5" y="153.5" width="224" height="23" rx="2" stroke="#f00" strokeWidth="7" />
      <rect x="18.5" y="384.5" width="104" height="21" rx="2" stroke="#f00" strokeWidth="7" />
      <rect
        x="18"
        y="412"
        width="105"
        height="22"
        rx="2"
        stroke="#f00"
        strokeWidth="6"
        strokeDasharray="18 6"
        strokeDashoffset="-2"
      />
      <g
        fontSize="37"
        fontWeight="700"
        fill="#f00"
        stroke="#fff"
        strokeWidth="6"
        strokeLinejoin="round"
        paintOrder="stroke"
      >
        <circle cx="8" cy="236" r="17" fill="#fff" stroke="none" />
        <circle cx="-19" cy="387" r="17" fill="#fff" stroke="none" />
        <text x="-10" y="250">②</text>
        <text x="31" y="250">ドラッグ</text>
        <text x="-8" y="305">して追加</text>
        <text x="-37" y="401">①</text>
      </g>
      <path fill="#f00" d="M220 187l2 1-72 214 10 2-26 17-2-28 9 4z" />
    </svg>
  )
}

function FieldPane() {
  return (
    <aside className="relative flex w-[261px] shrink-0 flex-col border-l border-[#ababab] bg-[#e6e6e6] pr-[14px] pl-3 text-[#444]">
      <div className="flex h-[46px] items-center pt-2 pr-[5px]">
        <h2 className="flex-1 font-['Noto_Sans_CJK_JP',sans-serif] text-base whitespace-nowrap text-[#217346]">
          ピボットグラフのフィ...
        </h2>
        <button type="button" aria-label="作業ウィンドウのオプション" className="mb-2 text-[#555]">
          <Caret />
        </button>
        <button type="button" aria-label="閉じる" className="mb-2 ml-8 text-[#666]">
          <Icon size={10}>
            <path strokeWidth="2" d="M.5.5l9 9M9.5.5l-9 9" />
          </Icon>
        </button>
      </div>
      <div className="flex h-[30px] items-end justify-between">
        <p className="mr-1 h-[30px] text-[10px] leading-[15px] whitespace-nowrap">
          レポートに追加するフィールドを選択し
          <br />
          てください:
        </p>
        <button
          type="button"
          aria-label="ツール"
          className="flex h-[27px] w-[44px] shrink-0 items-center justify-center gap-2 border border-[#ababab] bg-white"
        >
          <Icon size={14} className="text-[#999]">
            <circle cx="7" cy="7" r="3.5" strokeWidth="2.5" />
            <path strokeWidth="2.5" d="M4 1.5l1 2M10 1.5l-1 2M0 7h3M11 7h3M4 12.5l1-2M10 12.5l-1-2" />
          </Icon>
          <Caret />
        </button>
      </div>
      <div className="relative mt-[15px]">
        <input
          type="search"
          aria-label="フィールドの検索"
          placeholder="検索"
          className="block h-5 w-full border border-[#ababab] bg-white pl-px text-xs placeholder:text-[#666]"
        />
        <Icon size={13} className="absolute top-[3px] right-1 text-[#3f7ab8]">
          <circle cx="8" cy="5" r="3.5" strokeWidth="1.5" />
          <path strokeWidth="2.5" d="M5.5 8L1 12" />
        </Icon>
      </div>
      <div className="mt-[18px] flex h-[88px] bg-white">
        <div className="flex-1 overflow-hidden">
          <ul className="-mt-[12px] text-xs">
            {fields.map((field) => (
              <FieldRow key={field.name} {...field} />
            ))}
          </ul>
        </div>
        <div className="my-0.5 mr-px flex w-[15px] flex-col bg-[#f1f1f1]">
          <ScrollButton label="上へスクロール" d={arrowUp} />
          <div className="mt-[13px] h-6 border border-[#ababab] bg-white" />
          <ScrollButton label="下へスクロール" d={arrowDown} className="mt-auto" />
        </div>
      </div>
      <div className="mt-4 border-t border-dotted border-[#ababab]" />
      <p className="h-6 text-[10px] leading-6 whitespace-nowrap">次のボックス間でフィールドをドラッグしてください:</p>
      <div className="mt-[13px] -mr-px ml-[3px] grid grid-cols-[116px_1fr]">
        <DropArea
          title="フィルター"
          className="h-[79px] border-r border-[#bbb] pr-[6px]"
          icon={
            <Icon size={13} className="text-[#999]">
              <path stroke="none" fill="currentColor" d="M1 1h11L8 6v6H5V6z" />
            </Icon>
          }
        />
        <DropArea
          title="凡例 (系列)"
          className="h-[79px] pl-0.5"
          icon={
            <Icon size={13} className="text-[#999]">
              <path d="M1.5 1v11M4.5 1v11M7.5 1v11M10.5 1v11" />
            </Icon>
          }
        />
        <div className="h-[6px] border-r border-b border-[#bbb]" />
        <div className="h-[6px] border-b border-[#bbb]" />
        <DropArea
          title="軸 (分類項目)"
          className="h-[87px] border-r border-[#bbb] pr-[6px]"
          icon={
            <Icon size={13} className="text-[#999]">
              <path strokeWidth="2" d="M1 2h11" />
              <path d="M1 5.5h11M1 8.5h11M1 11.5h11" />
            </Icon>
          }
        >
          <button type="button" className="flex h-[22px] w-full items-center justify-between pr-[10px] pl-2 text-xs">
            備品名
            <Caret />
          </button>
        </DropArea>
        <DropArea
          title="値"
          className="h-[87px] pl-0.5"
          icon={
            <Icon size={13} className="text-[#999]">
              <path strokeWidth="1.5" d="M10 3.500V2H2l4 4.500L2 11h8V9.500" />
            </Icon>
          }
        >
          <div className="pt-px pr-0.5">
            <button
              type="button"
              className="flex h-[21px] w-full items-center justify-between border border-[#ababab] pr-[9px] pl-2 text-xs"
            >
              合計 / 金額
              <Caret />
            </button>
          </div>
        </DropArea>
      </div>
      <div className="mt-[21px] flex items-center pl-[3px]">
        <label className="flex items-center gap-1.5 text-[10px] whitespace-nowrap">
          <input type="checkbox" className="size-[13px] appearance-none border border-[#999] bg-white" />
          レイアウトの更新を保留する
        </label>
        <button type="button" disabled className="ml-auto h-[22px] w-[33px] bg-white text-xs text-[#b0b0b0]">
          更新
        </button>
      </div>
      <Callouts />
    </aside>
  )
}

function StatusBar() {
  return (
    <footer className="flex h-[22px] shrink-0 items-center border-t border-[#bbb] bg-[#f1f1f1] text-xs text-[#555]">
      <span className="pl-[7px]">準備完了</span>
      <Icon size={14} className="ml-5">
        <path d="M2.5 5v8.500h11v-11H7M4 6.5h2M7 6.5h2M10 6.5h2M4 8.5h2M7 8.5h2M10 8.5h2M4 10.5h2M7 10.5h2M10 10.5h2" />
        <circle cx="3.5" cy="3" r="2.5" fill="currentColor" />
        <path strokeWidth="2" d="M7 3h6" />
      </Icon>
      <div className="ml-auto flex h-full items-center">
        <button type="button" aria-label="標準" className="flex h-full w-[38px] items-center justify-center bg-[#c8c8c8]">
          <Icon size={13}>
            <path d="M.5.5h12v12H.5zM.5 4.5h12M.5 8.5h12M4.5 0v13M8.5 0v13" />
          </Icon>
        </button>
        <Tool label="ページ レイアウト" className="w-[38px]">
          <Icon size={14}>
            <path d="M.5.5h13v12H.5zM3.5 2.5h7v8h-7zM5 4.5h4M5 6.5h4M5 8.5h4" />
          </Icon>
        </Tool>
        <Tool label="改ページ プレビュー" className="w-[38px]">
          <Icon size={14}>
            <path d="M.5.5h13v12H.5zM5.5 0v7.500M9.5 0v7.500H5" />
          </Icon>
        </Tool>
        <Tool label="縮小" className="ml-1 w-2">
          <span className="h-0.5 w-[7px] bg-[#555]" />
        </Tool>
        <input
          type="range"
          aria-label="ズーム"
          min="0"
          max="200"
          defaultValue="100"
          className="mx-[3px] h-3 w-[100px] appearance-none bg-[linear-gradient(#aaa,#aaa)] bg-[length:100%_1px] bg-center bg-no-repeat [&::-webkit-slider-thumb]:h-[11px] [&::-webkit-slider-thumb]:w-1 [&::-webkit-slider-thumb]:appearance-none [&::-webkit-slider-thumb]:bg-[#555]"
        />
        <Tool label="拡大" className="w-2">
          <Icon size={8}>
            <path strokeWidth="2" d="M4 0v8M0 4h8" />
          </Icon>
        </Tool>
        <span className="w-[58px] pr-[9px] text-right">100%</span>
      </div>
    </footer>
  )
}

export default function App() {
  return (
    <div className="flex h-screen flex-col overflow-hidden bg-[#e6e6e6] font-['Noto_Sans','Noto_Sans_CJK_JP',sans-serif]">
      <TitleBar />
      <Ribbon />
      <FormulaBar />
      <main className="flex min-h-0 flex-1">
        <div className="flex min-w-0 flex-1 flex-col">
          <div className="flex min-h-0 flex-1">
            <div className="relative min-w-0 flex-1 overflow-hidden border-r border-b border-[#9b9b9b] font-['Noto_Sans_CJK_JP',sans-serif]">
              <Sheet />
              <Chart />
            </div>
            <div className="flex w-[21px] shrink-0 flex-col pt-0.5 pl-[3px]">
              <ScrollButton label="上へスクロール" d={arrowUp} />
              <div className="w-[15px] flex-1 bg-[#dadada]">
                <div className="h-[85%] border border-t-0 border-[#ababab] bg-white" />
              </div>
              <ScrollButton label="下へスクロール" d={arrowDown} />
            </div>
          </div>
          <SheetTabs />
        </div>
        <FieldPane />
      </main>
      <StatusBar />
    </div>
  )
}
